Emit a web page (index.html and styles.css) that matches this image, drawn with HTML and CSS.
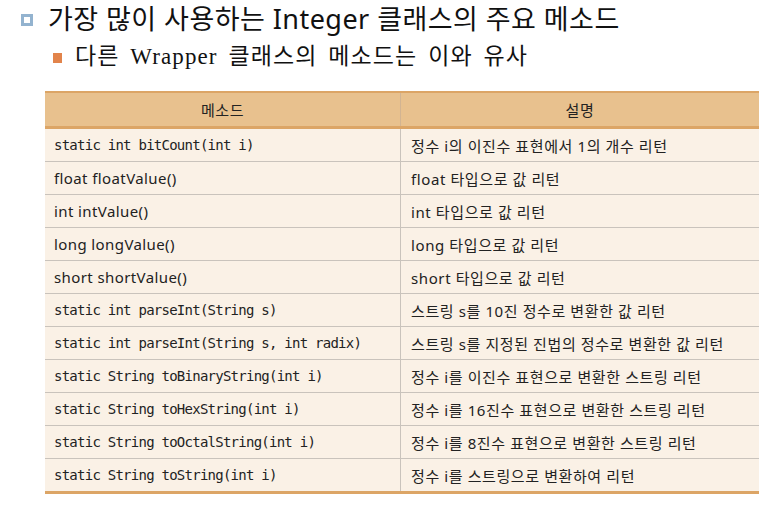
FILE: index.html
```html
<!DOCTYPE html>
<html lang="ko">
<head>
<meta charset="utf-8">
<link rel="stylesheet" href="styles.css">
</head>
<body>
<div class="slide">
  <div class="title"><span class="b1"></span><span>가장 많이 사용하는 Integer 클래스의 주요 메소드</span></div>
  <div class="sub"><span class="b2"></span><span>다른 Wrapper 클래스의 메소드는 이와 유사</span></div>
  <table class="tbl">
    <thead>
      <tr><th class="c1">메소드</th><th class="c2">설명</th></tr>
    </thead>
    <tbody>
      <tr><td class="c1 mono">static int bitCount(int i)</td><td>정수 i의 이진수 표현에서 1의 개수 리턴</td></tr>
      <tr><td class="c1 prop">float floatValue()</td><td>float 타입으로 값 리턴</td></tr>
      <tr><td class="c1 prop">int intValue()</td><td>int 타입으로 값 리턴</td></tr>
      <tr><td class="c1 prop">long longValue()</td><td>long 타입으로 값 리턴</td></tr>
      <tr><td class="c1 prop">short shortValue()</td><td>short 타입으로 값 리턴</td></tr>
      <tr><td class="c1 mono">static int parseInt(String s)</td><td>스트링 s를 10진 정수로 변환한 값 리턴</td></tr>
      <tr><td class="c1 mono">static int parseInt(String s, int radix)</td><td>스트링 s를 지정된 진법의 정수로 변환한 값 리턴</td></tr>
      <tr><td class="c1 mono">static String toBinaryString(int i)</td><td>정수 i를 이진수 표현으로 변환한 스트링 리턴</td></tr>
      <tr><td class="c1 mono">static String toHexString(int i)</td><td>정수 i를 16진수 표현으로 변환한 스트링 리턴</td></tr>
      <tr><td class="c1 mono">static String toOctalString(int i)</td><td>정수 i를 8진수 표현으로 변환한 스트링 리턴</td></tr>
      <tr class="last"><td class="c1 mono">static String toString(int i)</td><td>정수 i를 스트링으로 변환하여 리턴</td></tr>
    </tbody>
  </table>
</div>
</body>
</html>
```

FILE: styles.css
```css
html, body {
  margin: 0;
  padding: 0;
  background: #ffffff;
}
.slide {
  width: 774px;
  height: 517px;
  position: relative;
  overflow: hidden;
  font-family: "Noto Sans", "Noto Sans CJK KR", sans-serif;
  color: #111;
}
.title {
  display: flex;
  align-items: center;
  gap: 15px;
  padding: 2px 0 0 21px;
  height: 34px;
  font-family: "Noto Sans", "Noto Sans CJK KR", sans-serif;
  font-size: 27px;
  letter-spacing: 0.45px;
  line-height: 34px;
}
.b1 {
  width: 6px;
  height: 6px;
  border: 3px solid #93b3cf;
  background: #fff;
  flex: none;
  margin-top: 2px;
}
.sub {
  display: flex;
  align-items: center;
  gap: 13px;
  padding: 4px 0 0 53px;
  height: 34px;
  font-family: "Liberation Serif", "Noto Sans CJK KR", serif;
  font-size: 23px;
  letter-spacing: 1.1px;
  word-spacing: 4px;
  line-height: 34px;
}
.b2 {
  width: 9px;
  height: 10px;
  background: #e2844b;
  flex: none;
  margin-top: 2px;
}
.tbl {
  margin: 17px 0 0 45px;
  width: 714px;
  border-collapse: collapse;
  font-family: "Noto Sans", "Noto Sans CJK KR", sans-serif;
  font-size: 15px;
  letter-spacing: 0.6px;
  color: #222;
}
.tbl th {
  background: #e8c18e;
  height: 33px;
  padding: 0;
  font-weight: normal;
  font-size: 15px;
  text-align: center;
  border-top: 2px solid #dca566;
  border-bottom: 3px solid #dca566;
}
.tbl th.c1 {
  width: 355px;
  border-right: 1px solid #d2b492;
}
.tbl td {
  background: #faf1e6;
  height: 32px;
  padding: 0 0 0 10px;
  border-bottom: 1px solid #c9c3bc;
  white-space: nowrap;
}
.tbl td.c1 {
  padding-left: 9px;
  border-right: 1px solid #c9c3bc;
}
.tbl td.mono {
  font-family: "DejaVu Sans Mono", monospace;
  font-size: 14px;
  letter-spacing: -0.75px;
}
.tbl td.prop {
  font-size: 15px;
  letter-spacing: 0.4px;
}
.tbl tr.last td {
  border-bottom: 3px solid #dca566;
}
```
